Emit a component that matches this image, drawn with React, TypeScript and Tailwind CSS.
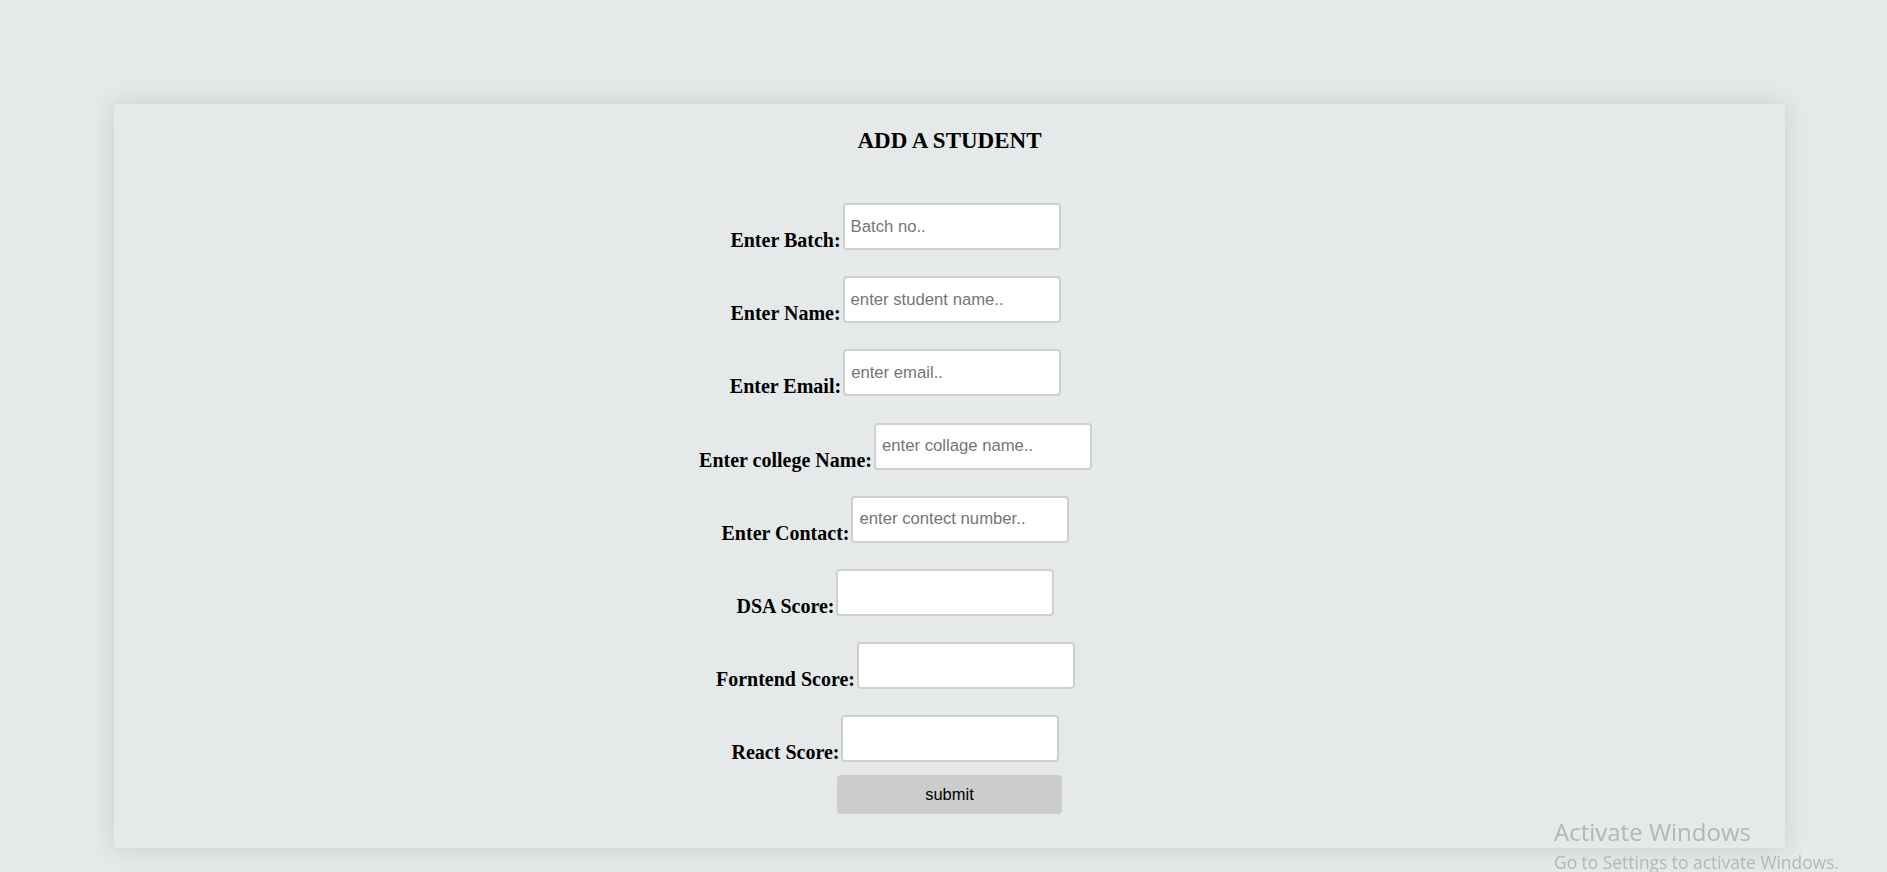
const fields = [
  { label: "Enter Batch:", placeholder: "Batch no.." },
  { label: "Enter Name:", placeholder: "enter student name.." },
  { label: "Enter Email:", placeholder: "enter email.." },
  { label: "Enter college Name:", placeholder: "enter collage name.." },
  { label: "Enter Contact:", placeholder: "enter contect number.." },
  { label: "DSA Score:", placeholder: "" },
  { label: "Forntend Score:", placeholder: "" },
  { label: "React Score:", placeholder: "" },
];

const App = () => {
  return (
    <div className="relative min-h-screen bg-[#e5e9ea] pt-[104px] pl-[114px] pr-[102px] pb-[25px]">
      {/* Card */}
      <div className="w-full bg-[#e5e9ea] shadow-[0_0_24px_rgba(0,0,0,0.12)] pt-[23px] pb-[34px] flex flex-col items-center">
        <h2 className="font-['Liberation_Serif',serif] font-bold text-[23px] leading-[28px] text-black">
          ADD A STUDENT
        </h2>

        <form className="w-full flex flex-col items-center mt-[48px]">
          <div className="w-full flex flex-col items-center gap-[26.2px] pr-[108px]">
            {fields.map((f, idx) => (
              <div key={idx} className="flex items-end">
                <label className="font-['Liberation_Serif',serif] font-bold text-[20px] text-black leading-none">
                  {f.label}
                </label>
                <input
                  type="text"
                  placeholder={f.placeholder}
                  className="ml-[2px] w-[218px] h-[47px] bg-white border-2 border-[#cfcfcf] rounded-[4px] px-[6px] font-['Liberation_Sans',Arial,sans-serif] text-[16.7px] text-black placeholder:text-[#757575] outline-none"
                />
              </div>
            ))}
          </div>

          <button
            type="button"
            className="mt-[13px] w-[225px] h-[39px] bg-[#cccccc] rounded-[4px] font-['Liberation_Sans',Arial,sans-serif] text-[16.5px] text-black"
          >
            submit
          </button>
        </form>
      </div>

      {/* Windows watermark */}
      <div className="fixed left-[1554px] top-[817px] font-['Open_Sans','Noto_Sans',sans-serif] text-[#b3b6b7] pointer-events-none">
        <div className="text-[24px] leading-[30px]">Activate Windows</div>
        <div className="text-[17.4px] leading-[22px] mt-[4px]">Go to Settings to activate Windows.</div>
      </div>
    </div>
  );
};

export default App;
